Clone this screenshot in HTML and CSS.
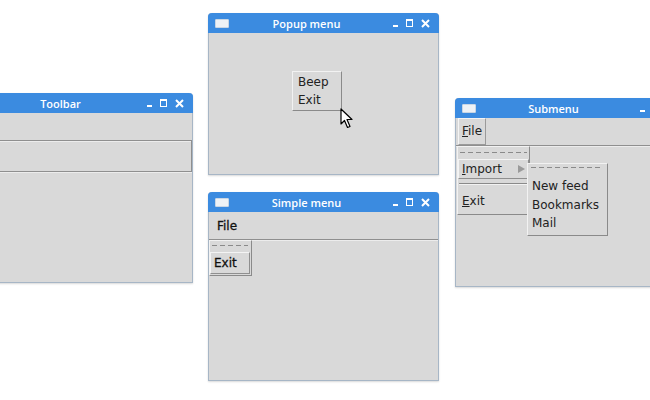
FILE: index.html
```html
<!DOCTYPE html>
<html lang="en">
<head>
    <meta charset="UTF-8">
    <title>Tk menus</title>
    <link rel="stylesheet" href="styles.css">
</head>
<body>
    <div class="desktop">

        <!-- Toolbar -->
        <div class="window win-toolbar">
            <div class="titlebar">
                <span class="title-icon"></span>
                <span class="title">Toolbar</span>
                <span class="controls">
                    <span class="ctl-min"></span>
                    <span class="ctl-max"></span>
                    <svg class="ctl-close" width="9" height="9" viewBox="0 0 9 9"><path d="M1 1L8 8M8 1L1 8" stroke="#fff" stroke-width="2"/></svg>
                </span>
            </div>
            <div class="menubar"></div>
            <div class="toolbar"></div>
        </div>

        <!-- Popup menu -->
        <div class="window win-popup">
            <div class="titlebar">
                <span class="title-icon"></span>
                <span class="title">Popup menu</span>
                <span class="controls">
                    <span class="ctl-min"></span>
                    <span class="ctl-max"></span>
                    <svg class="ctl-close" width="9" height="9" viewBox="0 0 9 9"><path d="M1 1L8 8M8 1L1 8" stroke="#fff" stroke-width="2"/></svg>
                </span>
            </div>
            <div class="body">
                <div class="menu popup">
                    <div class="item">Beep</div>
                    <div class="item">Exit</div>
                </div>
                <svg class="cursor" width="14" height="21" viewBox="0 0 14 21">
                    <path d="M1 1L1 16L4.5 12.5L7.5 19.5L10 18.5L7 11.5L12 11.5Z" fill="#fff" stroke="#000" stroke-width="1.2" stroke-linejoin="round"/>
                </svg>
            </div>
        </div>

        <!-- Simple menu -->
        <div class="window win-simple">
            <div class="titlebar">
                <span class="title-icon"></span>
                <span class="title">Simple menu</span>
                <span class="controls">
                    <span class="ctl-min"></span>
                    <span class="ctl-max"></span>
                    <svg class="ctl-close" width="9" height="9" viewBox="0 0 9 9"><path d="M1 1L8 8M8 1L1 8" stroke="#fff" stroke-width="2"/></svg>
                </span>
            </div>
            <div class="menubar">
                <span class="menu-label dark">File</span>
            </div>
            <div class="body">
                <div class="menu drop-simple">
                    <div class="tearoff"></div>
                    <div class="item active dark">Exit</div>
                </div>
            </div>
        </div>

        <!-- Submenu -->
        <div class="window win-sub">
            <div class="titlebar">
                <span class="title-icon"></span>
                <span class="title">Submenu</span>
                <span class="controls">
                    <span class="ctl-min"></span>
                    <span class="ctl-max"></span>
                    <svg class="ctl-close" width="9" height="9" viewBox="0 0 9 9"><path d="M1 1L8 8M8 1L1 8" stroke="#fff" stroke-width="2"/></svg>
                </span>
            </div>
            <div class="menubar">
                <span class="menu-label raised"><u>F</u>ile</span>
            </div>
            <div class="body">
                <div class="menu drop-sub">
                    <div class="tearoff"></div>
                    <div class="item active"><span><u>I</u>mport</span><span class="arrow"></span></div>
                    <div class="separator"></div>
                    <div class="item"><span><u>E</u>xit</span></div>
                </div>
                <div class="menu cascade">
                    <div class="tearoff"></div>
                    <div class="item">New feed</div>
                    <div class="item">Bookmarks</div>
                    <div class="item">Mail</div>
                </div>
            </div>
        </div>

    </div>
</body>
</html>
```

FILE: styles.css
```css
body {
    margin: 0;
    background: #fff;
    font-family: "DejaVu Sans", sans-serif;
    overflow: hidden;
}
.desktop {
    position: relative;
    width: 650px;
    height: 400px;
    overflow: hidden;
}
.window {
    position: absolute;
    width: 231px;
    display: flex;
    flex-direction: column;
    background: #d9d9d9;
    border: 1px solid #a7b6c6;
    border-top: none;
    border-radius: 4px 4px 0 0;
    box-sizing: border-box;
    box-shadow: 0 1px 2px rgba(0, 0, 0, 0.15);
}
.win-toolbar { left: -38px; top: 93px; height: 190px; }
.win-popup { left: 208px; top: 13px; height: 162px; }
.win-simple { left: 208px; top: 192px; height: 189px; }
.win-sub { left: 455px; top: 98px; height: 189px; }

.titlebar {
    height: 20px;
    margin: 0 -1px;
    flex-shrink: 0;
    display: flex;
    align-items: center;
    padding: 0 9px 0 7px;
    background: #3b8be0;
    border-radius: 4px 4px 0 0;
    color: #fff;
    font-family: "Open Sans", sans-serif;
    font-size: 11px;
    font-weight: 600;
}
.title-icon {
    width: 12px;
    height: 7px;
    background: #eef2f6;
    border: 1px solid #c9d6e4;
    border-radius: 1px;
}
.title {
    flex: 1;
    text-align: center;
    padding-right: 9px;
}
.controls {
    display: flex;
    align-items: center;
    gap: 8px;
}
.ctl-min {
    width: 5px;
    height: 2px;
    margin-top: 6px;
    background: #fff;
}
.ctl-max {
    width: 5px;
    height: 5px;
    border: 1.5px solid #fff;
    border-top-width: 2px;
}
.ctl-close {
    display: block;
}

.menubar {
    height: 27px;
    flex-shrink: 0;
    display: flex;
    align-items: center;
    padding: 0 2px;
    border-bottom: 1px solid #8f8f8f;
    box-shadow: 0 1px 0 #ececec;
    font-size: 12px;
    color: #222;
}
.toolbar {
    height: 30px;
    flex-shrink: 0;
    border-bottom: 1px solid #8f8f8f;
    border-right: 1px solid #8f8f8f;
    box-shadow: 0 1px 0 #ececec;
}
.menu-label {
    padding: 4px 6px;
}
.menu-label.raised {
    padding: 5px 3px 6px;
    border-top: 1px solid #f4f4f4;
    border-left: 1px solid #f4f4f4;
    border-right: 1px solid #9a9a9a;
    border-bottom: 1px solid #9a9a9a;
}
.dark {
    color: #111;
    -webkit-text-stroke: 0.3px #111;
}
.body {
    position: relative;
    flex: 1;
}

.menu {
    position: absolute;
    background: #d9d9d9;
    border-top: 1px solid #f2f2f2;
    border-left: 1px solid #f2f2f2;
    border-right: 1px solid #8a8a8a;
    border-bottom: 1px solid #8a8a8a;
    font-size: 12px;
    color: #222;
    box-sizing: border-box;
}
.item {
    height: 18px;
    display: flex;
    align-items: center;
    justify-content: space-between;
    padding: 0 4px;
    white-space: nowrap;
}
.item.active {
    border-top: 1px solid #f4f4f4;
    border-left: 1px solid #f4f4f4;
    border-bottom: 1px solid #8f8f8f;
    border-right: 1px solid #8f8f8f;
    padding: 0 3px;
}
.tearoff {
    height: 9px;
    margin: 0 2px;
    background: linear-gradient(to right, #8a8a8a 5px, transparent 5px) left 3px / 8px 1px repeat-x;
}
.separator {
    height: 6px;
    margin: 0 1px;
    background: linear-gradient(#8a8a8a, #8a8a8a) left 2px / 100% 1px no-repeat,
                linear-gradient(#f2f2f2, #f2f2f2) left 3px / 100% 1px no-repeat;
}
.arrow {
    width: 0;
    height: 0;
    border-top: 4px solid transparent;
    border-bottom: 4px solid transparent;
    border-left: 7px solid #9a9a9a;
}

.popup {
    left: 83px;
    top: 38px;
    width: 50px;
    padding: 1px 0 1px 1px;
}
.cursor {
    position: absolute;
    left: 131px;
    top: 75px;
}
.drop-simple {
    left: 0;
    top: 0;
    width: 43px;
    padding: 0 1px 1px 0;
}
.drop-simple .tearoff {
    height: 11px;
    background-position: left 4px;
}
.drop-simple .item {
    height: 20px;
}
.drop-sub {
    left: 1px;
    top: 0;
    width: 73px;
    padding-bottom: 4px;
}
.drop-sub .tearoff {
    height: 12px;
    background-position: left 5px;
}
.drop-sub .separator {
    height: 10px;
    background-position: left 4px, left 5px;
}
.drop-sub .item:last-child {
    margin-top: 3px;
}
.cascade {
    left: 71px;
    top: 17px;
    width: 81px;
    padding: 0 2px 2px 1px;
}
.cascade .tearoff {
    height: 10px;
}
.cascade .item {
    height: 18.5px;
    padding-left: 3px;
}
.cascade .tearoff + .item {
    margin-top: 3px;
}
```
